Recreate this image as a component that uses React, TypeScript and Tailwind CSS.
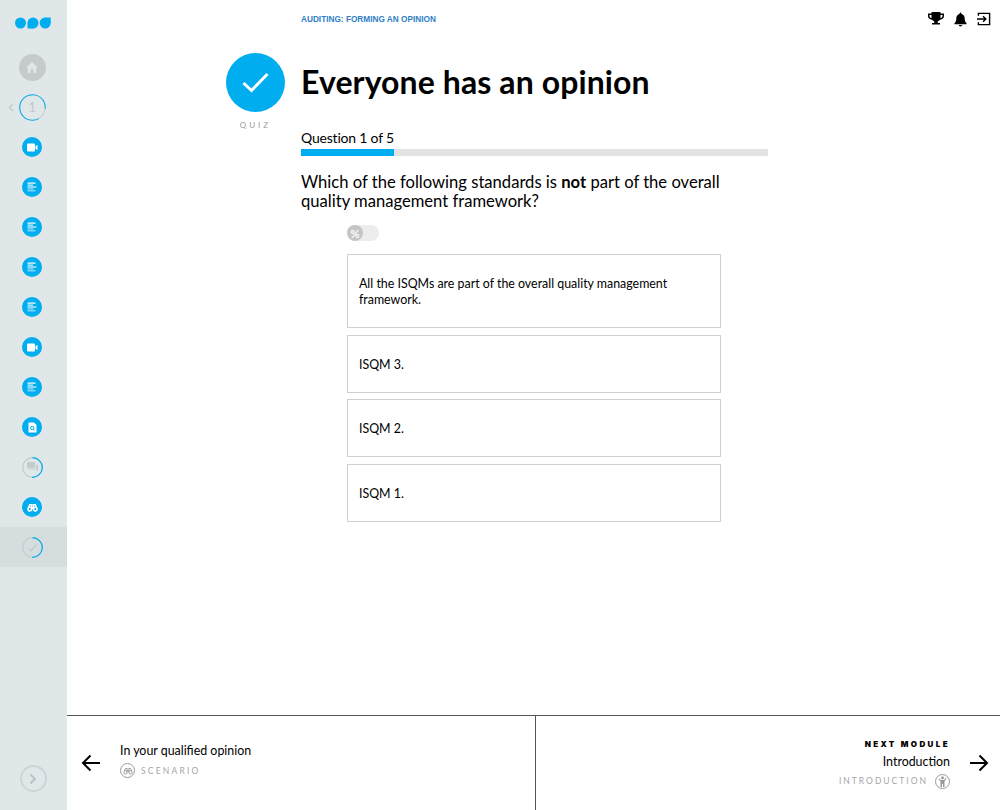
import React from 'react';

const Lines = () => (
  <svg width="10" height="10" viewBox="0 0 10 10" fill="#fff">
    <rect x="0.500" y="0.500" width="8" height="1.200" />
    <rect x="0.500" y="2.600" width="5.500" height="1" />
    <rect x="0.500" y="4.500" width="9" height="1" />
    <rect x="0.500" y="6.400" width="6" height="1" opacity="0.7" />
    <rect x="0.500" y="8.200" width="8" height="1.200" opacity="0.6" />
  </svg>
);

const Video = () => (
  <svg width="11" height="9" viewBox="0 0 11 9" fill="#fff">
    <rect x="0" y="0.500" width="8" height="8" rx="1" />
    <path d="M8.500 3.200 10.500 1.800v5.400L8.500 5.800z" />
  </svg>
);

const Doc = () => (
  <svg width="9" height="11" viewBox="0 0 9 11">
    <path d="M0.500 0.500h5.500l2.500 2.500v7.500h-8z" fill="#fff" />
    <circle cx="4.300" cy="6" r="1.700" fill="none" stroke="#00aeef" strokeWidth="1" />
    <path d="m5.500 7.200 1.300 1.300" stroke="#00aeef" strokeWidth="1" />
  </svg>
);

const Binoculars = ({ color = '#fff', size = 11, weight = 2.5 }: { color?: string; size?: number; weight?: number }) => (
  <svg width={size} height={size} viewBox="0 0 18 18" fill="none" stroke={color} strokeWidth={weight}>
    <circle cx="4.500" cy="11.500" r="3" />
    <circle cx="13.500" cy="11.500" r="3" />
    <path d="M2.500 9 4.500 4.500h3V10M15.500 9 13.500 4.500h-3V10M7.500 10h3" />
  </svg>
);

const Ring = ({ dash, children }: { dash: string; children: React.ReactNode }) => (
  <div className="relative flex h-[21px] w-[21px] items-center justify-center">
    <svg className="absolute inset-0" width="21" height="21" viewBox="0 0 21 21" fill="none">
      <circle cx="10.500" cy="10.500" r="9.800" stroke="#c5cacc" strokeWidth="1.200" />
      <circle cx="10.500" cy="10.500" r="9.800" stroke="#00aeef" strokeWidth="1.200" strokeDasharray={dash} transform="rotate(-90 10.500 10.500)" />
    </svg>
    {children}
  </div>
);

const Dot = ({ children }: { children: React.ReactNode }) => (
  <div className="flex h-5 w-5 items-center justify-center rounded-full bg-[#00aeef]">{children}</div>
);

const SideRow = ({ children, active = false }: { children: React.ReactNode; active?: boolean }) => (
  <div className={`flex h-10 w-full items-center justify-center pr-[3px] ${active ? 'bg-[#d6dddf]' : ''}`}>{children}</div>
);

const Answer = ({ text, tall = false }: { text: string; tall?: boolean }) => (
  <div className={`flex w-[374px] items-center border border-[#cfcfcf] px-[11px] pt-[1px] text-[12.400px] leading-[16px] text-black ${tall ? 'h-[74px]' : 'h-[58px]'}`}>
    <span className="w-[330px]">{text}</span>
  </div>
);

export default function App() {
  return (
    <div className="flex h-[810px] w-[1000px] overflow-hidden bg-white font-['Lato',sans-serif] text-black">
      <aside className="flex h-full w-[67px] shrink-0 flex-col items-center bg-[#e0e7e9]">
        <svg className="mr-[1px] mt-[17px]" width="36" height="12" viewBox="0 0 36 12" fill="#00aeef">
          <circle cx="5.500" cy="6" r="5.500" />
          <circle cx="18" cy="6" r="5.500" />
          <rect x="12.500" y="6" width="5.500" height="5.500" />
          <circle cx="30.200" cy="6" r="5.500" />
          <rect x="30.200" y="0.500" width="5.500" height="5.500" />
        </svg>
        <div className="mt-[18px] flex w-full flex-col items-center">
          <SideRow>
            <div className="flex h-[27px] w-[27px] items-center justify-center rounded-full bg-[#c5cacc]">
              <svg width="12" height="11" viewBox="0 0 14 13" fill="#e0e7e9">
                <path d="M7 0 14 6.500h-2V13H8.500V8.500h-3V13H2V6.500H0z" />
              </svg>
            </div>
          </SideRow>
          <SideRow>
            <div className="relative flex h-[27px] w-[27px] items-center justify-center">
              <svg className="absolute -left-[11px] top-[9px]" width="6" height="9" viewBox="0 0 6 9" fill="none" stroke="#c5cacc" strokeWidth="1.500">
                <path d="M5 1 1.500 4.500 5 8" />
              </svg>
              <svg className="absolute inset-0" width="27" height="27" viewBox="0 0 27 27" fill="none">
                <circle cx="13.500" cy="13.500" r="12.800" stroke="#c5cacc" strokeWidth="1" />
                <circle cx="13.500" cy="13.500" r="12.800" stroke="#00aeef" strokeWidth="1" strokeDasharray="68 13" transform="rotate(60 13.500 13.500)" />
              </svg>
              <span className="text-[14px] leading-none text-[#c5cacc]">1</span>
            </div>
          </SideRow>
          <SideRow><Dot><Video /></Dot></SideRow>
          <SideRow><Dot><Lines /></Dot></SideRow>
          <SideRow><Dot><Lines /></Dot></SideRow>
          <SideRow><Dot><Lines /></Dot></SideRow>
          <SideRow><Dot><Lines /></Dot></SideRow>
          <SideRow><Dot><Video /></Dot></SideRow>
          <SideRow><Dot><Lines /></Dot></SideRow>
          <SideRow><Dot><Doc /></Dot></SideRow>
          <SideRow>
            <Ring dash="31 62">
              <svg width="11" height="10" viewBox="0 0 12 11" fill="#c5cacc">
                <rect x="0" y="0" width="9" height="7" />
                <path d="M10 3h2v7l-2-1.500H3V8h7z" />
              </svg>
            </Ring>
          </SideRow>
          <SideRow><Dot><Binoculars /></Dot></SideRow>
          <SideRow active>
            <Ring dash="31 62">
              <svg width="11" height="9" viewBox="0 0 12 10" fill="none" stroke="#c5cacc" strokeWidth="1.500">
                <path d="m1.500 5.500 3 3 6-7" />
              </svg>
            </Ring>
          </SideRow>
        </div>
        <div className="mb-[18px] mr-[1px] mt-auto flex h-[27px] w-[27px] items-center justify-center rounded-full border-2 border-[#cdd4d6]">
          <svg width="8" height="12" viewBox="0 0 8 12" fill="none" stroke="#bcc3c5" strokeWidth="2">
            <path d="m1.500 1.500 4.500 4.500-4.500 4.500" />
          </svg>
        </div>
      </aside>

      <div className="flex min-w-0 flex-1 flex-col">
        <main className="flex flex-1 flex-col">
          <div className="flex items-start justify-between pl-[234px] pr-[9px] pt-[11px]">
            <span className="mt-[3px] font-['Liberation_Sans',sans-serif] text-[8.250px] font-bold leading-[12px] text-[#2f80c8]">AUDITING: FORMING AN OPINION</span>
            <div className="flex items-center gap-[10px]">
              <svg width="16" height="16" viewBox="0 0 16 16" fill="#000">
                <path d="M3.500 1h9v1.500H16V5c0 2-1.500 3.500-4 3.700-.6.900-1.300 1.400-2.200 1.600V12H12v1.500H4V12h2.200v-1.700C5.300 10.100 4.600 9.600 4 8.700 1.500 8.500 0 7 0 5V2.500h3.500zM1.500 4v1c0 1 .7 1.900 2 2.200V4zm13 0h-2v3.200c1.300-.3 2-1.200 2-2.200z" />
              </svg>
              <svg width="13" height="15" viewBox="0 0 14 15" fill="#000">
                <path d="M7 0c.6 0 1 .4 1 1v.6c2.200.5 3.500 2.200 3.500 4.400 0 3 .6 4.500 2 5.500v1H.5v-1c1.400-1 2-2.500 2-5.500 0-2.200 1.300-3.900 3.500-4.400V1c0-.6.400-1 1-1zM5.200 13.500h3.600C8.800 14.500 8 15 7 15s-1.800-.5-1.800-1.500z" />
              </svg>
              <svg width="14" height="14" viewBox="0 0 15 15" fill="none" stroke="#000" strokeWidth="1.500">
                <path d="M1.500 4V1.500h12v12h-12V11" />
                <path d="M0 7.500h9M6.500 4.500l3 3-3 3" />
              </svg>
            </div>
          </div>

          <div className="mt-[26px] flex pl-[159px]">
            <div className="flex w-[75px] shrink-0 flex-col">
              <div className="flex h-[59px] w-[59px] items-center justify-center rounded-full bg-[#00aeef]">
                <svg width="27" height="21" viewBox="0 0 27 21" fill="none" stroke="#fff" strokeWidth="3">
                  <path d="m1.500 11 8 7.500L25.500 2" />
                </svg>
              </div>
              <span className="mt-[7px] w-[59px] text-center text-[8px] leading-[12px] tracking-[3px] text-[#9a9a9a]">QUIZ</span>
            </div>
            <div className="w-[467px]">
              <h1 className="mt-[9px] text-[32px] font-bold leading-[40px] tracking-[0.100px]">Everyone has an opinion</h1>
              <div className="mt-[26px] text-[14px] leading-[20px] tracking-[-0.200px]">Question 1 of 5</div>
              <div className="mt-[1px] h-[7px] w-full bg-[#e3e3e3]">
                <div className="h-full w-[93px] bg-[#00aeef]" />
              </div>
              <p className="mt-[17px] w-[440px] text-[16.600px] leading-[19px]">
                Which of the following standards is <b>not</b> part of the overall quality management framework?
              </p>
            </div>
          </div>

          <div className="ml-[280px] mt-[14px] flex flex-col">
            <div className="flex h-4 w-8 items-center rounded-full bg-[#ececec]">
              <div className="flex h-4 w-4 items-center justify-center rounded-full bg-[#c5c5c5] text-[11px] font-bold leading-none text-white">%</div>
            </div>
            <div className="mt-[13px] flex flex-col">
              <Answer tall text="All the ISQMs are part of the overall quality management framework." />
              <div className="mt-[7px]"><Answer text="ISQM 3." /></div>
              <div className="mt-[6px]"><Answer text="ISQM 2." /></div>
              <div className="mt-[7px]"><Answer text="ISQM 1." /></div>
            </div>
          </div>
        </main>

        <footer className="flex h-[95px] shrink-0 border-t border-[#555]">
          <div className="flex w-[469px] items-center border-r border-[#555] pl-[14px]">
            <svg width="19" height="18" viewBox="0 0 19 18" fill="none" stroke="#000" strokeWidth="2">
              <path d="M19 9H2M9.500 1.500 2 9l7.500 7.500" />
            </svg>
            <div className="-mt-[6px] ml-[20px] flex flex-col">
              <span className="text-[12.400px] leading-[18px]">In your qualified opinion</span>
              <div className="mt-[3px] flex items-center gap-[6px]">
                <div className="flex h-[15px] w-[15px] items-center justify-center rounded-full border border-[#9a9a9a]">
                  <Binoculars color="#9a9a9a" size={10} weight={1.8} />
                </div>
                <span className="text-[8.500px] leading-[12px] tracking-[2.200px] text-[#a5a5a5]">SCENARIO</span>
              </div>
            </div>
          </div>
          <div className="flex flex-1 items-center justify-end pr-[11px]">
            <div className="flex flex-col items-end">
              <span className="font-['Inter',sans-serif] text-[8px] font-black leading-[12px] tracking-[2.400px] text-black">NEXT MODULE</span>
              <span className="mt-[3px] text-[12.400px] leading-[18px]">Introduction</span>
              <div className="mt-[3px] flex items-center gap-[7px]">
                <span className="text-[8.500px] leading-[12px] tracking-[2px] text-[#a5a5a5]">INTRODUCTION</span>
                <div className="flex h-[15px] w-[15px] items-center justify-center rounded-full border border-[#9a9a9a]">
                  <svg width="9" height="11" viewBox="0 0 9 11" fill="#9a9a9a">
                    <circle cx="4.500" cy="1.800" r="1.500" />
                    <path d="M3 4h3l2-2.500.6.500L6.500 5.500V11H5V8H4v3H2.500V5.500L.5 3l.6-.5z" />
                  </svg>
                </div>
              </div>
            </div>
            <svg className="ml-[20px]" width="19" height="18" viewBox="0 0 19 18" fill="none" stroke="#000" strokeWidth="2">
              <path d="M0 9h17M9.500 1.500 17 9l-7.500 7.500" />
            </svg>
          </div>
        </footer>
      </div>
    </div>
  );
}
